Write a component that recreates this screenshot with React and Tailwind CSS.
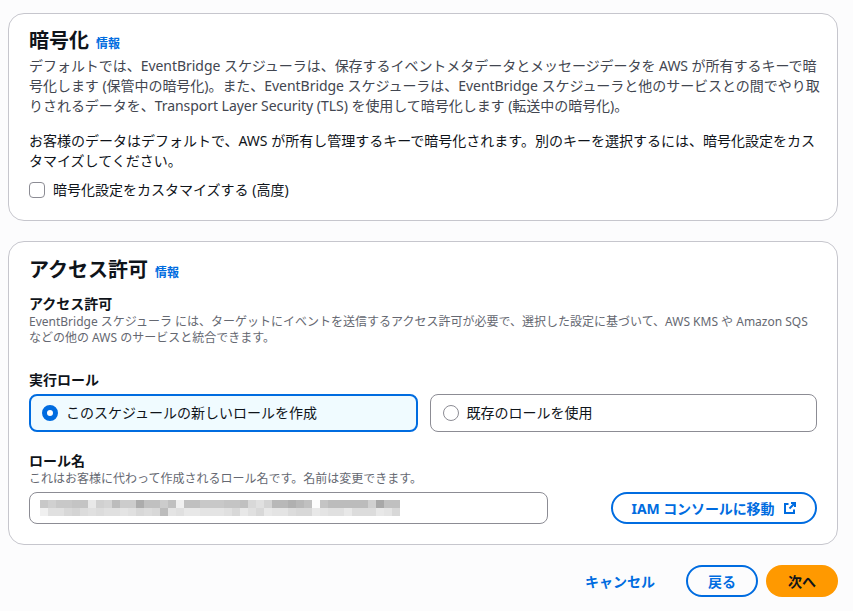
import { useState } from 'react';

const font = 'font-["Noto_Sans","Noto_Sans_CJK_JP",sans-serif]';

// mosaic over the role name: two rows of 8px cells
const topCells = ['c8','d0','c8','c8','c4','c4','e8','d0','d4','bc','cc','cc','ac','c0','c0','cc','c0','f0','c0','c0','c8','c8','c8','c4','c4','c0','d8','e0','d4','b8','b8','b0','b8','c0','fc','c4','bc','bc','bc','bc','bc','d0','a8','c0','c0'];
const bottomCells = ['f0','e0','e0','d8','d4','dc','e0','dc','e0','e0','e4','e0','d8','dc','d8','bc','e4','e0','e8','e8','e4','e4','e4','e0','d8','e8','e0','d8','e8','e4','e4','dc','d8','d8','e8','e4','e0','e0','e8','dc','dc','dc','e8','e4','d8'];

function Info({ className }) {
  return <a className={`text-[12px] leading-4 font-bold text-[#006ce0] ${className}`}>情報</a>;
}

function Card({ className, children }) {
  return (
    <section className={`mx-2 w-[830px] rounded-2xl border border-[#c6c6cd] bg-white px-5 ${className}`}>
      {children}
    </section>
  );
}

function RoleOption({ selected, label, onClick }) {
  return (
    <button
      onClick={onClick}
      className={`flex h-[38px] flex-1 items-center gap-2 rounded-lg px-[12px] pb-[2px] text-left text-[14px] text-[#0f141a] ${
        selected ? 'border-2 border-[#006ce0] bg-[#f0fbff] pl-[11px]' : 'border border-[#8c8c94] bg-white'
      }`}
    >
      {selected ? (
        <span className="mt-[2px] h-4 w-4 shrink-0 rounded-full border-[5px] border-[#006ce0] bg-white"></span>
      ) : (
        <span className="mt-[2px] h-4 w-4 shrink-0 rounded-full border border-[#8c8c94] bg-white"></span>
      )}
      {label}
    </button>
  );
}

export default function App() {
  const [role, setRole] = useState('new');

  return (
    <div className={`${font} h-[611px] w-[853px] overflow-hidden bg-[#fcfcfd] pt-[13px] text-[#0f141a]`}>
      {/* Encryption */}
      <Card className="h-[208px] pt-[13px]">
        <div className="flex items-center gap-[7px]">
          <h2 className="text-[20px] leading-7 font-bold">暗号化</h2>
          <Info className="mt-[5px]" />
        </div>
        <p className="mt-[1px] w-[792px] text-[14px] leading-5 tracking-[-0.04px] text-[#424650]">
          デフォルトでは、EventBridge スケジューラは、保存するイベントメタデータとメッセージデータを AWS が所有するキーで暗号化します (保管中の暗号化)。また、EventBridge スケジューラは、EventBridge スケジューラと他のサービスとの間でやり取りされるデータを、Transport Layer Security (TLS) を使用して暗号化します (転送中の暗号化)。
        </p>
        <p className="mt-[15px] text-[14px] leading-5 text-[#0f141a]">
          お客様のデータはデフォルトで、AWS が所有し管理するキーで暗号化されます。別のキーを選択するには、暗号化設定をカスタマイズしてください。
        </p>
        <label className="mt-[9px] flex items-center gap-2 text-[14px] leading-5">
          <span className="h-4 w-4 rounded border border-[#8c8c94] bg-white"></span>
          暗号化設定をカスタマイズする (高度)
        </label>
      </Card>

      {/* Permissions */}
      <Card className="mt-5 h-[304px] pt-[14px]">
        <div className="flex items-center gap-[7px]">
          <h2 className="text-[20px] leading-7 font-bold">アクセス許可</h2>
          <Info className="mt-[5px]" />
        </div>
        <h3 className="mt-[10px] text-[14px] leading-5 font-bold">アクセス許可</h3>
        <p className="w-[790px] text-[12px] leading-4 text-[#656871]">
          EventBridge スケジューラ には、ターゲットにイベントを送信するアクセス許可が必要で、選択した設定に基づいて、AWS KMS や Amazon SQS などの他の AWS のサービスと統合できます。
        </p>

        <h3 className="mt-[24px] text-[14px] leading-5 font-bold">実行ロール</h3>
        <div className="mt-1 flex gap-3">
          <RoleOption selected={role === 'new'} label="このスケジュールの新しいロールを作成" onClick={() => setRole('new')} />
          <RoleOption selected={role === 'existing'} label="既存のロールを使用" onClick={() => setRole('existing')} />
        </div>

        <h3 className="mt-[19px] text-[14px] leading-5 font-bold">ロール名</h3>
        <p className="text-[12px] leading-4 text-[#656871]">これはお客様に代わって作成されるロール名です。名前は変更できます。</p>
        <div className="mt-[5px] flex items-center justify-between">
          <div className="flex h-8 w-[519px] items-center rounded-lg border border-[#8c8c94] bg-white pl-[10px]">
            <svg width="360" height="16" viewBox="0 0 360 16">
              {topCells.map((c, i) => <rect key={i} x={i * 8} y="0" width="8" height="8" fill={`#${c}${c}${c}`} />)}
              {bottomCells.map((c, i) => <rect key={i} x={i * 8} y="8" width="8" height="8" fill={`#${c}${c}${c}`} />)}
            </svg>
          </div>
          <button className="flex h-8 w-[206px] items-center justify-center gap-[10px] rounded-full border-2 border-[#006ce0] text-[14px] font-bold tracking-[-0.1px] text-[#006ce0]">
            IAM コンソールに移動
            <svg width="12" height="12" viewBox="0 0 12 12" fill="none" stroke="currentColor" strokeWidth="2">
              <path d="M7 1h4v4" />
              <path d="M11 1 5.5 6.5" />
              <path d="M4.5 2H1v9h9V7.5" />
            </svg>
          </button>
        </div>
      </Card>

      {/* Footer actions */}
      <div className="mt-[20px] mr-[15px] flex items-center justify-end">
        <button className="mr-[31px] text-[14px] font-bold text-[#006ce0]">キャンセル</button>
        <button className="mr-2 h-8 w-[72px] rounded-full border-2 border-[#006ce0] text-[14px] font-bold text-[#006ce0]">戻る</button>
        <button className="h-8 w-[72px] rounded-full bg-[#ff9900] text-[14px] font-bold text-[#0f141a]">次へ</button>
      </div>
    </div>
  );
}
